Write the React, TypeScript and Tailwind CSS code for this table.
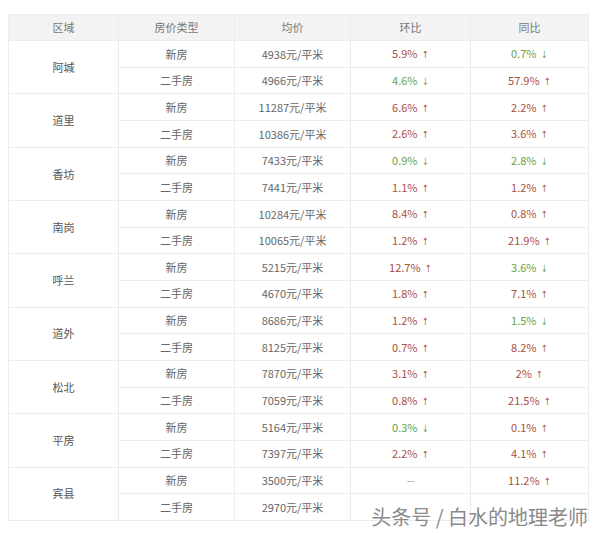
import React from 'react';

type Change = { v: string; dir?: 'up' | 'down' };
type Row = { type: string; price: string; mom: Change; yoy: Change };
type District = { name: string; rows: Row[] };

const up = (v: string): Change => ({ v, dir: 'up' });
const down = (v: string): Change => ({ v, dir: 'down' });
const none = (v: string): Change => ({ v });

const districts: District[] = [
  { name: '阿城', rows: [
    { type: '新房', price: '4938', mom: up('5.9%'), yoy: down('0.7%') },
    { type: '二手房', price: '4966', mom: down('4.6%'), yoy: up('57.9%') },
  ] },
  { name: '道里', rows: [
    { type: '新房', price: '11287', mom: up('6.6%'), yoy: up('2.2%') },
    { type: '二手房', price: '10386', mom: up('2.6%'), yoy: up('3.6%') },
  ] },
  { name: '香坊', rows: [
    { type: '新房', price: '7433', mom: down('0.9%'), yoy: down('2.8%') },
    { type: '二手房', price: '7441', mom: up('1.1%'), yoy: up('1.2%') },
  ] },
  { name: '南岗', rows: [
    { type: '新房', price: '10284', mom: up('8.4%'), yoy: up('0.8%') },
    { type: '二手房', price: '10065', mom: up('1.2%'), yoy: up('21.9%') },
  ] },
  { name: '呼兰', rows: [
    { type: '新房', price: '5215', mom: up('12.7%'), yoy: down('3.6%') },
    { type: '二手房', price: '4670', mom: up('1.8%'), yoy: up('7.1%') },
  ] },
  { name: '道外', rows: [
    { type: '新房', price: '8686', mom: up('1.2%'), yoy: down('1.5%') },
    { type: '二手房', price: '8125', mom: up('0.7%'), yoy: up('8.2%') },
  ] },
  { name: '松北', rows: [
    { type: '新房', price: '7870', mom: up('3.1%'), yoy: up('2%') },
    { type: '二手房', price: '7059', mom: up('0.8%'), yoy: up('21.5%') },
  ] },
  { name: '平房', rows: [
    { type: '新房', price: '5164', mom: down('0.3%'), yoy: up('0.1%') },
    { type: '二手房', price: '7397', mom: up('2.2%'), yoy: up('4.1%') },
  ] },
  { name: '宾县', rows: [
    { type: '新房', price: '3500', mom: none('--'), yoy: up('11.2%') },
    { type: '二手房', price: '2970', mom: none(''), yoy: none('') },
  ] },
];

function ChangeCell({ c }: { c: Change }) {
  const color = c.dir === 'up' ? 'text-[#a8503f]' : c.dir === 'down' ? 'text-[#66a24a]' : 'text-[#999]';
  return (
    <td className={`border border-[#ececec] text-center ${color}`}>
      {c.v}
      {c.dir && (
        <span className="ml-[3px] inline-block scale-x-75 font-['DejaVu_Sans',sans-serif] text-[10px]">
          {c.dir === 'up' ? '↑' : '↓'}
        </span>
      )}
    </td>
  );
}

export default function App() {
  return (
    <div className="relative w-[600px] h-[533px] bg-white pl-[8px] pt-[14px] font-['Noto_Sans_CJK_SC','Noto_Sans',sans-serif] text-[11px] text-[#666]">
      <table className="w-[580px] border-collapse table-fixed">
        <colgroup>
          <col className="w-[110px]" />
          <col className="w-[116px]" />
          <col className="w-[116px]" />
          <col className="w-[120px]" />
          <col className="w-[118px]" />
        </colgroup>
        <thead>
          <tr className="h-[26px] bg-[#f3f3f3] text-[#777]">
            <th className="border border-[#ececec] font-normal">区域</th>
            <th className="border border-[#ececec] font-normal">房价类型</th>
            <th className="border border-[#ececec] font-normal">均价</th>
            <th className="border border-[#ececec] font-normal">环比</th>
            <th className="border border-[#ececec] font-normal">同比</th>
          </tr>
        </thead>
        <tbody>
          {districts.map(d =>
            d.rows.map((r, i) => (
              <tr key={d.name + i} className="h-[26.67px]">
                {i === 0 && (
                  <td rowSpan={2} className="border border-[#ececec] text-center text-[#555]">{d.name}</td>
                )}
                <td className="border border-[#ececec] text-center">{r.type}</td>
                <td className="border border-[#ececec] text-center">{r.price}元/平米</td>
                <ChangeCell c={r.mom} />
                <ChangeCell c={r.yoy} />
              </tr>
            ))
          )}
        </tbody>
      </table>

      {/* watermark */}
      <div className="absolute right-[12px] bottom-[6px] text-[20px] leading-none text-[#8a8a8a] [text-shadow:0_0_2px_#fff,0_0_2px_#fff]">
        头条号 / 白水的地理老师
      </div>
    </div>
  );
}
